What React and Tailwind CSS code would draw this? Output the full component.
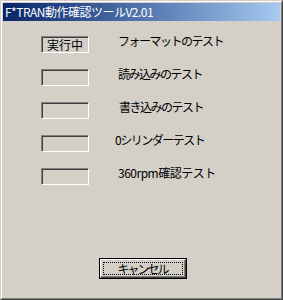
export default function App() {
	const rows = [
		{ status: "実行中", label: "フォーマットのテスト", cls: "pl-[29px] tracking-[-1.5px]" },
		{ status: "", label: "読み込みのテスト", cls: "pl-[29px] tracking-[-1.5px]" },
		{ status: "", label: "書き込みのテスト", cls: "pl-[30px] tracking-[-1.5px]" },
		{ status: "", label: "0シリンダーテスト", cls: "pl-[26px] tracking-[-1.5px]" },
		{ status: "", label: "360rpm確認テスト", cls: "pl-[29px] tracking-[-0.5px]" },
	]

	return (
		<div
			className="h-[300px] w-[283px] border border-t-[#d4d0c8] border-l-[#d4d0c8] border-r-[#404040] border-b-[#404040] bg-[#d4d0c8] text-[12px] text-black"
			style={{ fontFamily: '"Noto Sans CJK JP", "Liberation Sans", sans-serif' }}
		>
			<div className="flex h-full w-full flex-col border border-t-white border-l-white border-r-[#808080] border-b-[#808080] p-px">
				{/* title bar */}
				<div className="flex h-[18px] items-center bg-gradient-to-r from-[#0a246a] to-[#a6caf0] pl-[2px] leading-none tracking-[-0.5px] text-white">
					F*TRAN動作確認ツールV2.01
				</div>

				{/* test rows */}
				<div className="flex flex-col gap-[16px] pt-[15px] pl-[38px]">
					{rows.map((row, i) => (
						<div key={i} className="flex h-[17px] items-start">
							<div className="flex h-[17px] w-[48px] items-center justify-center border border-t-[#808080] border-l-[#808080] border-r-white border-b-white shadow-[inset_1px_1px_0_#404040] pt-px leading-none">
								{row.status}
							</div>
							<div className={`${row.cls} -mt-[1px] leading-none`}>{row.label}</div>
						</div>
					))}
				</div>

				{/* cancel button */}
				<div className="mt-auto flex justify-center pb-[18px] pl-[2px]">
					<button className="h-[21px] w-[88px] border border-black bg-[#d4d0c8] p-0">
						<div className="h-full w-full border border-t-white border-l-white border-r-[#404040] border-b-[#404040] shadow-[inset_-1px_-1px_0_#808080] p-[2px]">
							<div className="flex h-full w-full items-center justify-center border border-dotted border-black leading-none tracking-[-2px]">
								キャンセル
							</div>
						</div>
					</button>
				</div>
			</div>
		</div>
	)
}
